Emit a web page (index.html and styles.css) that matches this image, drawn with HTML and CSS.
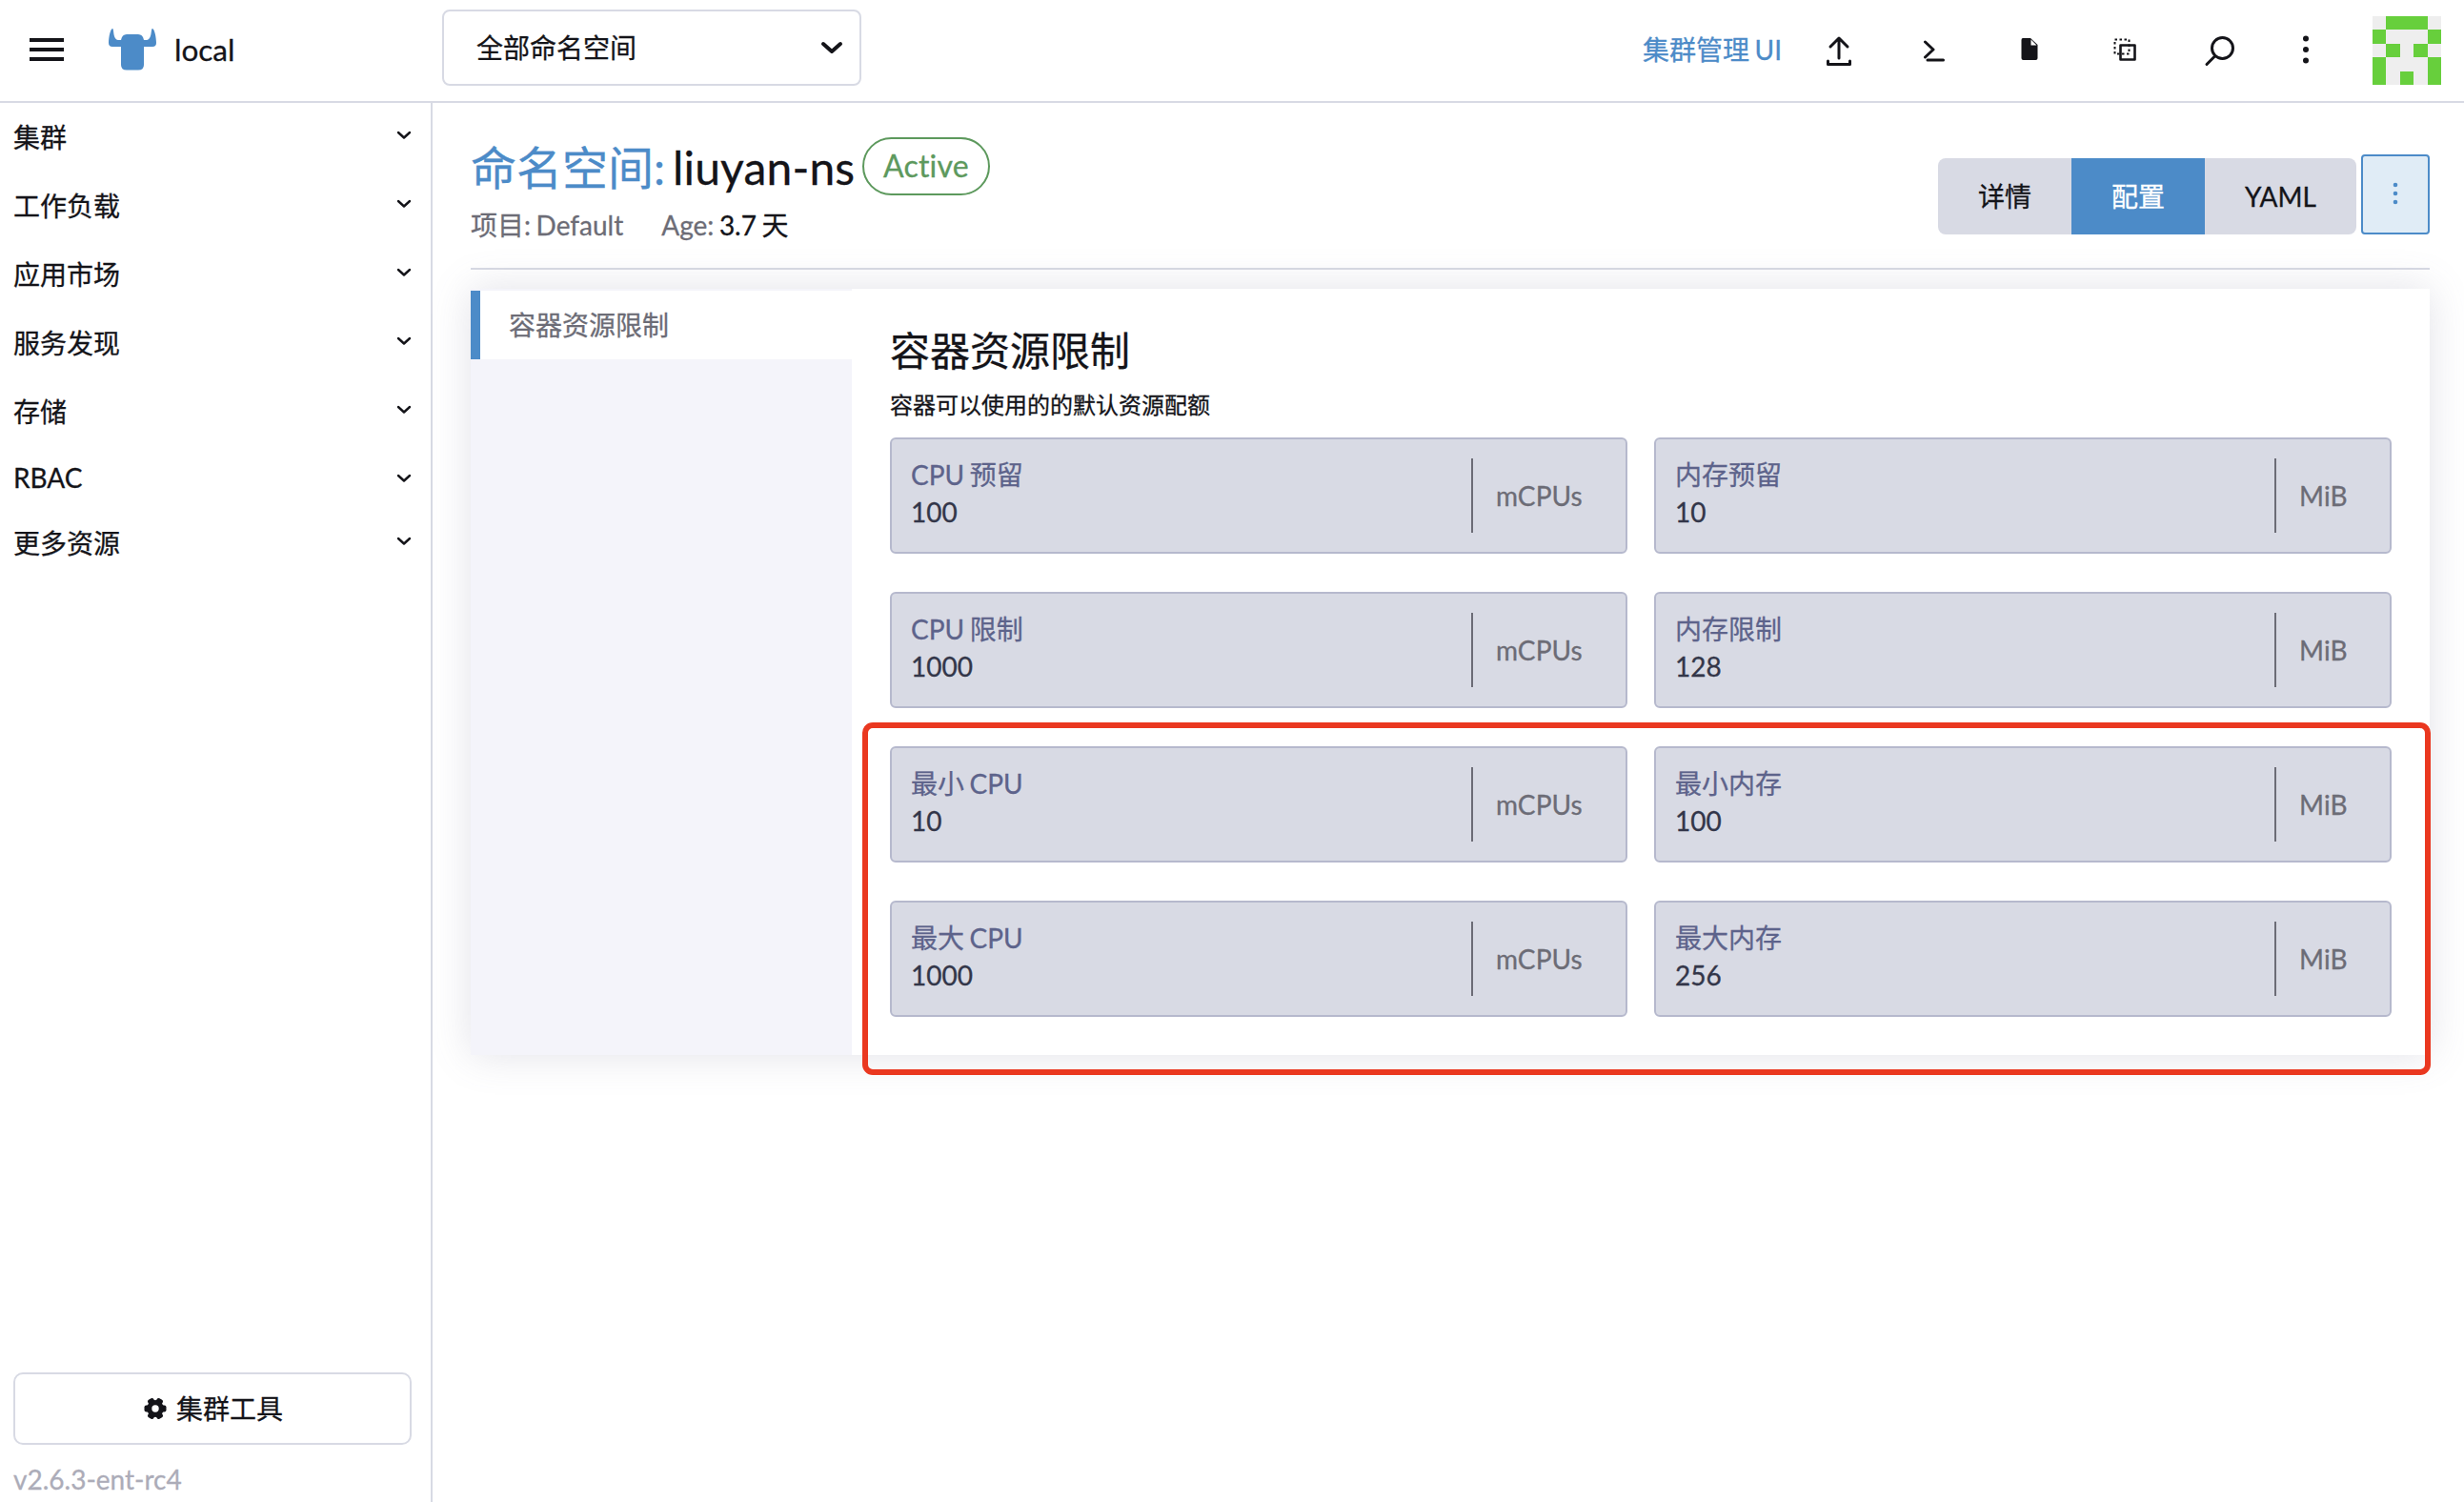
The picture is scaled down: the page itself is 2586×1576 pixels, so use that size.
FILE: index.html
```html
<!DOCTYPE html>
<html lang="zh-CN">
<head>
<meta charset="utf-8">
<title>命名空间: liuyan-ns</title>
<link rel="stylesheet" href="styles.css">
</head>
<body>
<header class="topbar">
  <svg class="menu" width="36" height="24" viewBox="0 0 36 24"><path d="M0 0h36v4H0zM0 10h36v4H0zM0 20h36v4H0z" fill="currentColor"/></svg>
  <svg class="bull" width="50" height="44" viewBox="0 0 50 44"><path d="M4 0C6 0 4 11 10 12H13Q14 6 19 6H31Q36 6 37 12H40C46 11 44 0 46 0C48 0 50 9 50 15Q50 19 46 19H37V38Q37 43.500 31 43.500H19Q13 43.500 13 38V19H4Q0 19 0 15C0 9 2 0 4 0Z" fill="#4c8bc8"/></svg>
  <span class="cluster">local</span>
  <div class="ns-select"><span>全部命名空间</span><svg width="24" height="14" viewBox="0 0 24 14"><path d="M3 3l9 8 9-8" fill="none" stroke="currentColor" stroke-width="4" stroke-linecap="round" stroke-linejoin="round"/></svg></div>
  <a class="manage">集群管理 UI</a>
  <svg class="tools" width="520" height="60" viewBox="1900 20 520 60" fill="none" stroke="currentColor" stroke-width="3" stroke-linecap="round" stroke-linejoin="round">
    <path d="M1930 61V41M1921 49L1930 40L1939 49M1918.500 64V67.500H1941.500V64"/>
    <path d="M2020.500 44L2029 52L2020.500 60M2023 63H2039.500"/>
    <path d="M2123 40H2131L2138.500 47V61Q2138.500 63 2136.500 63H2123.500Q2121.500 63 2121.500 61V42Q2121.500 40 2123 40Z" fill="currentColor" stroke="none"/>
    <path d="M2131.500 41.500V47.500H2137.500Z" fill="#fff" stroke="none"/>
    <rect x="2225.500" y="47.500" width="15" height="15" stroke-width="2.600"/>
    <rect x="2219.500" y="41.500" width="15" height="15" stroke-width="2" stroke-dasharray="2.500 2.500" stroke-linecap="butt"/>
    <circle cx="2332.500" cy="50.500" r="11"/><path d="M2324 59.500L2316 67.500"/>
  </svg>
  <svg class="kebab" width="8" height="32" viewBox="0 0 8 32" fill="currentColor"><circle cx="4" cy="4.500" r="3"/><circle cx="4" cy="16" r="3"/><circle cx="4" cy="27.500" r="3"/></svg>
  <svg class="avatar" width="72" height="72" viewBox="0 0 5 5" shape-rendering="crispEdges"><path fill="#eee" d="M0 0h5v5H0z"/><path fill="#67cf3c" d="M1 0h3v1H1zM0 1h1v1H0zM4 1h1v1H4zM1 2h1v1H1zM3 2h1v1H3zM0 3h1v2H0zM4 3h1v2H4zM2 4h1v1H2z"/></svg>
</header>
<div class="shell">
  <aside class="sidebar">
    <nav>
      <div class="nav-row"><span>集群</span><svg class="chev" viewBox="0 0 14 8"><path d="M1 1l6 5.500 6-5.500"/></svg></div>
      <div class="nav-row"><span>工作负载</span><svg class="chev" viewBox="0 0 14 8"><path d="M1 1l6 5.500 6-5.500"/></svg></div>
      <div class="nav-row"><span>应用市场</span><svg class="chev" viewBox="0 0 14 8"><path d="M1 1l6 5.500 6-5.500"/></svg></div>
      <div class="nav-row"><span>服务发现</span><svg class="chev" viewBox="0 0 14 8"><path d="M1 1l6 5.500 6-5.500"/></svg></div>
      <div class="nav-row"><span>存储</span><svg class="chev" viewBox="0 0 14 8"><path d="M1 1l6 5.500 6-5.500"/></svg></div>
      <div class="nav-row latin"><span>RBAC</span><svg class="chev" viewBox="0 0 14 8"><path d="M1 1l6 5.500 6-5.500"/></svg></div>
      <div class="nav-row"><span>更多资源</span><svg class="chev" viewBox="0 0 14 8"><path d="M1 1l6 5.500 6-5.500"/></svg></div>
    </nav>
    <div class="cluster-tools"><svg width="24" height="24" viewBox="-12 -12 24 24"><g fill="currentColor"><rect x="-11.500" y="-3.500" width="23" height="7" rx="2"/><rect x="-11.500" y="-3.500" width="23" height="7" rx="2" transform="rotate(60)"/><rect x="-11.500" y="-3.500" width="23" height="7" rx="2" transform="rotate(120)"/><circle r="9"/></g><circle r="3.700" fill="#fff"/></svg><span>集群工具</span></div>
    <div class="version">v2.6.3-ent-rc4</div>
  </aside>
  <main class="main">
    <div class="masthead">
      <div class="heading">
        <h1><span class="kind">命名空间:</span><span class="name">liuyan-ns</span><span class="badge">Active</span></h1>
        <div class="meta"><span>项目: Default</span><span>Age: <b>3.7 天</b></span></div>
      </div>
      <div class="actions">
        <div class="group"><span>详情</span><span class="on">配置</span><span class="yaml">YAML</span></div>
        <div class="more"><svg width="8" height="24" viewBox="0 0 8 24" fill="currentColor"><circle cx="4" cy="3" r="2.300"/><circle cx="4" cy="12" r="2.300"/><circle cx="4" cy="21" r="2.300"/></svg></div>
      </div>
    </div>
    <section class="panel">
      <div class="tabs"><div class="tab">容器资源限制</div></div>
      <div class="content">
        <h2>容器资源限制</h2>
        <p>容器可以使用的的默认资源配额</p>
        <div class="fields">
          <div class="field"><div><label>CPU 预留</label><output>100</output></div><span class="unit">mCPUs</span></div>
          <div class="field"><div><label>内存预留</label><output>10</output></div><span class="unit mib">MiB</span></div>
          <div class="field"><div><label>CPU 限制</label><output>1000</output></div><span class="unit">mCPUs</span></div>
          <div class="field"><div><label>内存限制</label><output>128</output></div><span class="unit mib">MiB</span></div>
          <div class="field"><div><label>最小 CPU</label><output>10</output></div><span class="unit">mCPUs</span></div>
          <div class="field"><div><label>最小内存</label><output>100</output></div><span class="unit mib">MiB</span></div>
          <div class="field"><div><label>最大 CPU</label><output>1000</output></div><span class="unit">mCPUs</span></div>
          <div class="field"><div><label>最大内存</label><output>256</output></div><span class="unit mib">MiB</span></div>
        </div>
      </div>
      <div class="highlight"></div>
    </section>
  </main>
</div>
</body>
</html>
```
FILE: styles.css
```css
* { box-sizing: border-box; }
body { margin: 0; height: 1576px; display: flex; flex-direction: column; background: #fff; color: #141419; font: 28px/40px Lato, "Noto Sans CJK SC", sans-serif; word-spacing: -1.6px; -webkit-text-stroke: .3px; overflow: hidden; }
svg { display: block; flex: none; }
span, label, output { white-space: nowrap; }
.topbar { height: 108px; flex: none; display: flex; align-items: center; border-bottom: 2px solid #d8dae4; padding: 0 24px 2px 31px; }
.menu { margin-top: -1px; }
.bull { margin-left: 47px; }
.cluster { margin-left: 19px; width: 281px; font-size: 31.5px; }
.ns-select { width: 440px; height: 80px; margin-top: -4px; border: 2px solid #d8dae4; border-radius: 8px; display: flex; align-items: center; justify-content: space-between; padding: 0 17px 0 34px; }
.manage { margin-left: auto; color: #4c8bc8; width: 176px; white-space: nowrap; }
.avatar { margin-left: 66px; margin-top: 2px; }
.tools { margin-right: -4px; margin-top: -4px; }
.shell { flex: 1; display: flex; }
.sidebar { width: 454px; border-right: 2px solid #d8dae4; display: flex; flex-direction: column; }
nav { flex: 1; }
.nav-row { height: 72px; display: flex; align-items: center; justify-content: space-between; padding: 0 21px 0 14px; }
.nav-row.latin { height: 66px; }
.chev { width: 14px; height: 8px; margin-bottom: 4px; overflow: visible; fill: none; stroke: #141419; stroke-width: 2.4; stroke-linecap: round; stroke-linejoin: round; }
.latin .chev { margin-bottom: 0; margin-top: 1px; }
.cluster-tools { height: 76px; margin: 0 20px 0 14px; border: 2px solid #d8dae4; border-radius: 10px; display: flex; align-items: center; justify-content: center; gap: 10px; padding-left: 2px; }
.version { height: 60px; padding: 16px 0 0 14px; color: #acacb8; }
.main { flex: 1; padding: 0 36px 0 40px; }
.masthead { height: 175px; border-bottom: 2px solid #d8dae4; display: flex; justify-content: space-between; }
.heading { padding-top: 36px; }
h1 { margin: 0; height: 64px; display: flex; align-items: center; font-size: 48px; font-weight: 400; line-height: 64px; }
.kind { color: #4c8bc8; width: 212px; }
.name { width: 199px; letter-spacing: .15px; }
.badge { height: 61px; border: 2px solid #5d995d; border-radius: 31px; padding: 0 20px; color: #5d995d; font-size: 32px; line-height: 56px; letter-spacing: .2px; margin-top: -3px; }
.meta { display: flex; gap: 40px; margin-top: 8px; line-height: 40px; color: #6c6c76; }
.meta b { font-weight: 400; color: #141419; }
.actions { display: flex; align-items: flex-end; height: 138px; gap: 5px; }
.group { display: flex; height: 80px; border-radius: 8px; overflow: hidden; background: #d8dae4; line-height: 81px; text-align: center; }
.group span { width: 140px; }
.group .yaml { width: 159px; }
.group .on { background: #4c8bc8; color: #fff; }
.more { width: 72px; height: 84px; border: 2px solid #4c8bc8; border-radius: 4px; background: #e0ecf6; color: #4c8bc8; display: flex; align-items: center; justify-content: center; padding-bottom: 3px; }
.panel { position: relative; margin-top: 20px; height: 804px; display: flex; box-shadow: 0 0 40px rgba(108, 108, 140, .2); background: #fff; }
.tabs { width: 400px; background: #f4f4fa; padding-top: 2px; }
.tab { height: 72px; background: #fff; border-left: 10px solid #4c8bc8; padding-left: 30px; line-height: 73px; color: #6c6c76; }
.content { flex: 1; padding: 37px 40px 0; }
h2 { margin: 0; font-size: 42px; line-height: 56px; font-weight: 400; }
p { margin: 11px 0 16px; font-size: 24px; line-height: 36px; }
.fields { display: grid; grid-template-columns: 1fr 1fr; gap: 40px 28px; }
.field { height: 122px; border: 2px solid #b6b9cd; border-radius: 6px; background: #d8dae4; display: flex; align-items: center; justify-content: space-between; padding-left: 20px; color: #333649; }
.field > div { padding-bottom: 5px; }
.field label, .field output { display: block; line-height: 39px; }
.field label { color: #5d638b; }
.unit { width: 162px; height: 78px; line-height: 79px; border-left: 2px solid #6c6c76; padding-left: 24px; color: #6c6c76; letter-spacing: .1px; }
.unit.mib { width: 121px; }
.highlight { position: absolute; left: 411px; top: 455px; width: 1646px; height: 370px; border: 6px solid #ea3820; border-radius: 11px; }
```
